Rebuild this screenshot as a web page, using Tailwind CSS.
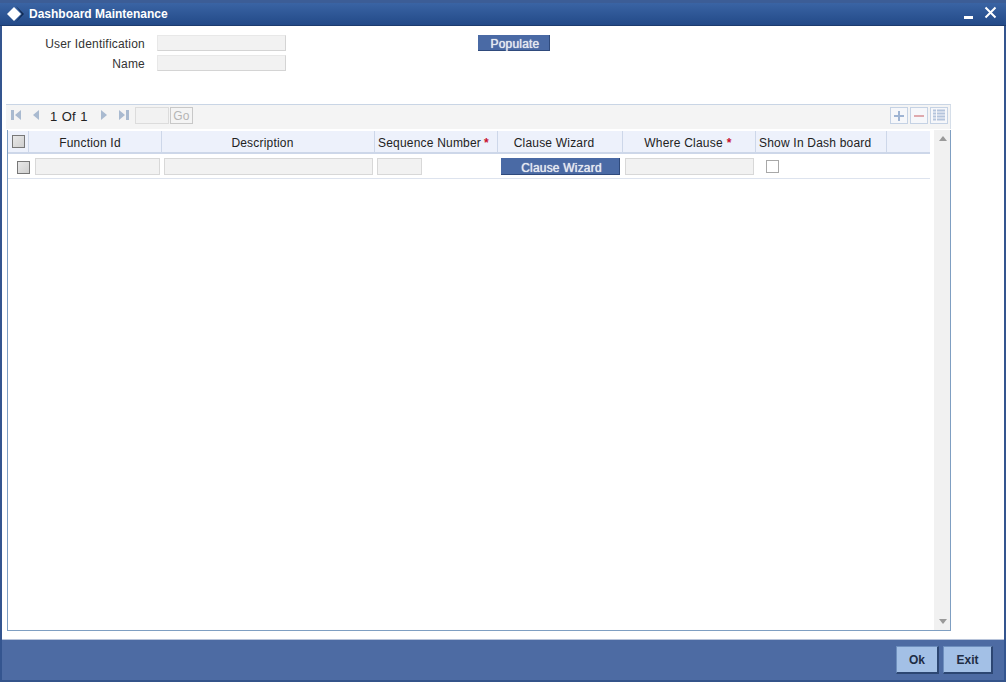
<!DOCTYPE html>
<html lang="en">
  <head>
    <meta charset="UTF-8" />
    <title>Dashboard Maintenance</title>
    <script src="https://cdn.jsdelivr.net/npm/@tailwindcss/browser@4"></script>
  </head>
  <body class="bg-white overflow-hidden">
    <div class="w-[1006px] h-[682px] flex flex-col bg-[#34558f] font-['Liberation_Sans',Arial,sans-serif] text-[12px] text-[#222] tracking-[0.2px]">
      <!-- Title bar -->
      <div class="h-[26px] shrink-0 flex items-center pl-[6px] pr-[8px] pt-[3px] border-t-[3px] border-b border-t-[#3c5d96] border-b-[#1c3b6e] bg-gradient-to-b from-[#3a64a4] to-[#234a88] box-border tracking-normal">
        <svg width="18" height="16" viewBox="0 0 18 16" class="shrink-0 -mt-[3px]">
          <path d="M10 0l8 8-8 8 6-8z" fill="#10294f" />
          <path d="M8 1l7 7-7 7-7-7z" fill="#fff" />
        </svg>
        <span class="ml-[5px] -mt-[3px] font-bold text-white">Dashboard Maintenance</span>
        <div class="ml-auto flex items-start -mt-[6px]">
          <div class="w-[9px] h-[3px] bg-white mt-[10px] mr-[11px]"></div>
          <svg width="13" height="13" viewBox="0 0 13 13" class="mr-[1px]"><path d="M1.5 1.5l10 10M11.5 1.5l-10 10" stroke="#fff" stroke-width="2" /></svg>
        </div>
      </div>

      <div class="flex-1 flex flex-col min-h-0 bg-white mx-[2px] relative">
        <!-- Form -->
        <div class="h-[78px] shrink-0 flex pt-[9px] pl-[4px]">
          <div class="w-[139px] flex flex-col gap-[4px] items-end text-[#333]">
            <label class="h-[16px] leading-[18px]">User Identification</label>
            <label class="h-[16px] leading-[18px]">Name</label>
          </div>
          <div class="ml-[12px] w-[129px] flex flex-col gap-[4px]">
            <div class="h-[16px] bg-[#f2f2f2] border-b border-r border-[#d4d4d4] border-t border-l border-t-[#e8e8e8] border-l-[#e8e8e8]"></div>
            <div class="h-[16px] bg-[#f2f2f2] border-b border-r border-[#d4d4d4] border-t border-l border-t-[#e8e8e8] border-l-[#e8e8e8]"></div>
          </div>
          <button class="ml-[192px] w-[72px] h-[16px] pl-[3px] bg-[#4a6aa5] border-r border-b border-[#2f4a7c] text-[#e6e9f0] leading-[19px] [text-shadow:0_0_1px_#fff]">Populate</button>
        </div>

        <!-- Grid toolbar -->
        <div class="ml-[4px] w-[945px] h-[25px] shrink-0 bg-[#f4f4f4] border-t border-r border-t-[#c9d5e5] border-r-[#d5dee9] flex items-start pt-[2px] text-[#222]">
          <svg width="12" height="12" viewBox="0 0 12 12" class="ml-[4px] mt-[2px]"><path d="M1 1h3v10H1zM11 1v10L5 6z" fill="#a9bad0" /></svg>
          <svg width="8" height="12" viewBox="0 0 8 12" class="ml-[10px] mt-[2px]"><path d="M7 1v10L1 6z" fill="#a9bad0" /></svg>
          <span class="ml-[10px] mt-[2px] w-[37px] text-[13px] leading-[16px] tracking-normal whitespace-nowrap [word-spacing:1px]">1 Of 1</span>
          <svg width="8" height="12" viewBox="0 0 8 12" class="ml-[13px] mt-[2px]"><path d="M1 1v10l6-5z" fill="#a9bad0" /></svg>
          <svg width="12" height="12" viewBox="0 0 12 12" class="ml-[10px] mt-[2px]"><path d="M1 1v10l6-5zM8 1h3v10H8z" fill="#a9bad0" /></svg>
          <div class="ml-[5px] w-[34px] h-[17px] bg-[#f2f2f2] border border-[#dcdcdc]"></div>
          <div class="ml-[1px] w-[23px] h-[17px] border border-[#c8c8c8] text-[#b5b5b5] flex items-center justify-center">Go</div>
          <div class="ml-auto flex gap-[2px] pr-[2px]">
            <div class="w-[18px] h-[17px] border border-[#c5d2e4] bg-[#f6f7fa] flex items-center justify-center">
              <svg width="12" height="12" viewBox="0 0 12 12"><path d="M6 1v10M1 6h10" stroke="#9fb4d3" stroke-width="2" /></svg>
            </div>
            <div class="w-[18px] h-[17px] border border-[#c5d2e4] bg-[#f6f7fa] flex items-center justify-center">
              <svg width="12" height="12" viewBox="0 0 12 12"><path d="M1 6h10" stroke="#dfa9ad" stroke-width="2" /></svg>
            </div>
            <div class="w-[18px] h-[17px] border border-[#c5d2e4] bg-[#f6f7fa] flex items-center justify-center">
              <svg width="14" height="13" viewBox="0 0 14 13"><path d="M1 1.5h3M1 4.5h3M1 7.5h3M1 10.5h3M5 1.5h8M5 4.5h8M5 7.5h8M5 10.5h8" stroke="#b4c4dc" stroke-width="2" /></svg>
            </div>
          </div>
        </div>

        <!-- Grid frame -->
        <div class="ml-[5px] w-[944px] h-[501px] shrink-0 mt-[1px] border-l border-r border-b border-[#7f9fc2] flex bg-white">
          <div class="w-[922px] shrink-0 flex flex-col pt-px">
            <div class="flex h-[23px] bg-[#edf1fb] border-b-2 border-[#cdd7e9] text-[#222]">
              <div class="w-[21px] border-r border-[#cdd7e9] flex items-center justify-center">
                <div class="w-[13px] h-[13px] border border-[#777] bg-gradient-to-br from-[#e8e8e8] to-[#cfcfcf]"></div>
              </div>
              <div class="w-[133px] pt-[2px] border-r border-[#cdd7e9] flex items-center justify-center pr-[10px]">Function Id</div>
              <div class="w-[213px] pt-[2px] border-r border-[#cdd7e9] flex items-center justify-center pr-[11px]">Description</div>
              <div class="w-[123px] pt-[2px] border-r border-[#cdd7e9] flex items-center pl-[3px] whitespace-nowrap">Sequence Number<span class="ml-[3px] text-[#c8102e] font-bold">*</span></div>
              <div class="w-[125px] pt-[2px] border-r border-[#cdd7e9] flex items-center justify-center pr-[12px]">Clause Wizard</div>
              <div class="w-[133px] pt-[2px] border-r border-[#cdd7e9] flex items-center justify-center pr-[2px]">Where Clause<span class="ml-[4px] text-[#c8102e] font-bold">*</span></div>
              <div class="w-[131px] pt-[2px] border-r border-[#cdd7e9] flex items-center pl-[3px] whitespace-nowrap">Show In Dash board</div>
              <div class="flex-1"></div>
            </div>
            <div class="flex h-[25px] pt-px items-center border-b border-[#dde3ee]">
              <div class="w-[27px] shrink-0 pl-[9px] relative">
                <div class="w-[13px] h-[13px] mt-px border border-[#777] bg-gradient-to-br from-[#e8e8e8] to-[#cfcfcf]"></div>
              </div>
              <div class="w-[125px] h-[17px] shrink-0 bg-[#f2f2f2] border border-[#d8d8d8]"></div>
              <div class="ml-[4px] w-[209px] h-[17px] shrink-0 bg-[#f2f2f2] border border-[#d8d8d8]"></div>
              <div class="ml-[4px] w-[45px] h-[17px] shrink-0 bg-[#f2f2f2] border border-[#d8d8d8]"></div>
              <button class="ml-[79px] w-[119px] h-[17px] pl-[3px] shrink-0 bg-[#4a6aa5] border-r border-b border-[#2f4a7c] text-[#e6e9f0] leading-[20px] [text-shadow:0_0_1px_#fff]">Clause Wizard</button>
              <div class="ml-[5px] w-[129px] h-[17px] shrink-0 bg-[#f2f2f2] border border-[#d8d8d8]"></div>
              <div class="ml-[12px] w-[13px] h-[13px] shrink-0 border border-[#a8a8a8] bg-white"></div>
            </div>
          </div>
          <!-- Scrollbar -->
          <div class="ml-[4px] flex-1 bg-[#f1f1f1] flex flex-col items-center justify-between py-[6px] pl-px">
            <svg width="8" height="5" viewBox="0 0 8 5"><path d="M4 0l4 5H0z" fill="#9a9a9a" /></svg>
            <svg width="8" height="5" viewBox="0 0 8 5"><path d="M0 0h8L4 5z" fill="#9a9a9a" /></svg>
          </div>
        </div>

        <!-- Footer -->
        <div class="absolute left-0 right-0 bottom-0 h-[41px] border-t border-t-[#b8c4da] bg-[#4d6ba3] flex items-start justify-end gap-[4px] pt-[6px] pr-[11px] tracking-normal">
          <button class="w-[43px] h-[28px] bg-[#a3c0e6] border-r-2 border-b-2 border-[#2c4672] border-t border-l border-t-[#6e8fbe] border-l-[#6e8fbe] font-bold text-[#1f2d44]">Ok</button>
          <button class="w-[50px] h-[28px] bg-[#a3c0e6] border-r-2 border-b-2 border-[#2c4672] border-t border-l border-t-[#6e8fbe] border-l-[#6e8fbe] font-bold text-[#1f2d44]">Exit</button>
        </div>
      </div>
      <div class="h-[2px] shrink-0 bg-[#34538a]"></div>
    </div>
  </body>
</html>
